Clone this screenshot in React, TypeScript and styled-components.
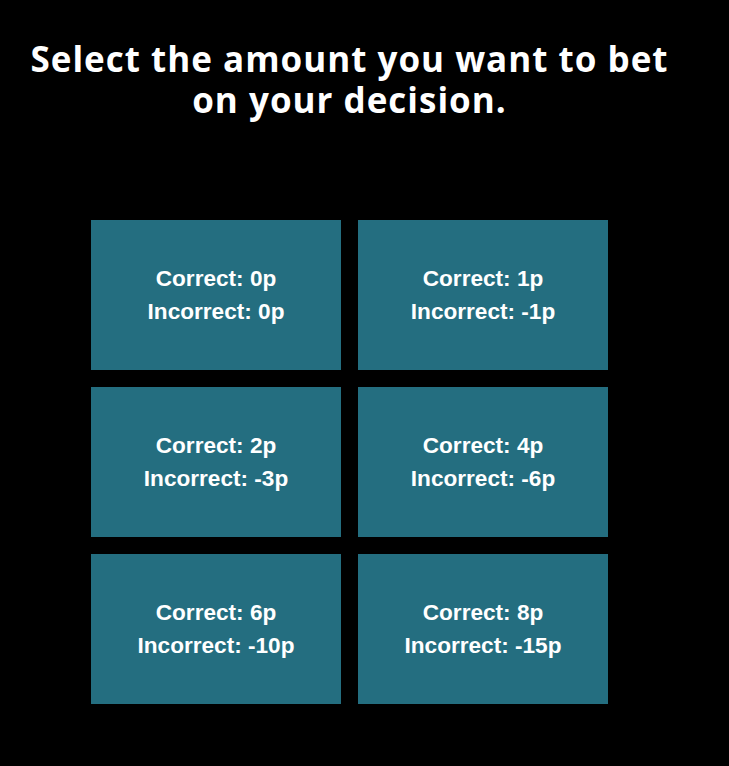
import React from "react";
import styled, { createGlobalStyle } from "styled-components";

const Global = createGlobalStyle`
  html, body { margin: 0; padding: 0; background: #000; }
  body { min-height: 766px; }
`;

const Page = styled.div`
  width: 699px;
  padding-top: 38px;
  display: flex;
  flex-direction: column;
  align-items: center;
`;

const Heading = styled.h1`
  margin: 0;
  width: 660px;
  text-align: center;
  color: #fff;
  font-family: "Open Sans", Lato, sans-serif;
  font-weight: 700;
  font-size: 35px;
  letter-spacing: 1px;
  line-height: 41px;
`;

const Grid = styled.div`
  margin-top: 100px;
  display: grid;
  grid-template-columns: repeat(2, 250px);
  grid-auto-rows: 150px;
  gap: 17px;
`;

const Option = styled.button`
  border: none;
  margin: 0;
  padding: 0;
  background: #246e80;
  color: #fff;
  font-family: "Liberation Sans", Arial, sans-serif;
  font-weight: 700;
  font-size: 22.6px;
  line-height: 33px;
  display: flex;
  flex-direction: column;
  align-items: center;
  justify-content: center;
  cursor: pointer;
`;

const options: [number, number][] = [
  [0, 0],
  [1, -1],
  [2, -3],
  [4, -6],
  [6, -10],
  [8, -15],
];

export default function App() {
  return (
    <>
      <Global />
      <Page>
        <Heading>Select the amount you want to bet on your decision.</Heading>
        <Grid>
          {options.map(([c, i]) => (
            <Option key={c}>
              <span>Correct: {c}p</span>
              <span>Incorrect: {i}p</span>
            </Option>
          ))}
        </Grid>
      </Page>
    </>
  );
}
